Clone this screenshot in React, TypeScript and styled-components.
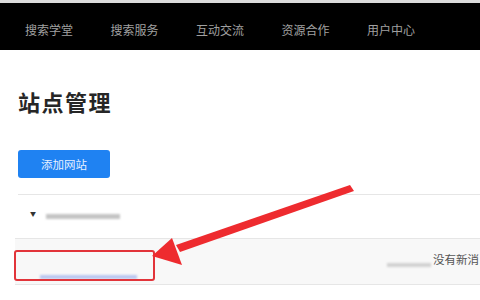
import React from 'react';
import styled, { createGlobalStyle } from 'styled-components';

const GlobalStyle = createGlobalStyle`
  html, body {
    margin: 0;
    padding: 0;
    background: #ffffff;
  }
  body {
    font-family: "Noto Sans CJK SC", "Noto Sans", sans-serif;
  }
`;

const navItems = ['搜索学堂', '搜索服务', '互动交流', '资源合作', '用户中心'];

const App = () => {
  return (
    <Page>
      <GlobalStyle />
      <TopLine />
      <NavBar>
        {navItems.map((item) => (
          <NavItem key={item}>{item}</NavItem>
        ))}
      </NavBar>

      <Content>
        <Title>站点管理</Title>
        <AddButton>添加网站</AddButton>
        <Divider />
        <SiteRow>
          <Caret>▼</Caret>
          <Blur width={74} color="#c4c4c4" height={5} />
        </SiteRow>
        <DetailRow>
          <LinkCell>
            <Blur width={97} color="#b9c6ef" height={4} />
          </LinkCell>
          <RightCell>
            <Blur width={44} color="#d2d2d2" height={4} offset={6} />
            <Message>没有新消</Message>
          </RightCell>
        </DetailRow>
      </Content>

      <HighlightBox />
      <ArrowLayer width="480" height="300" viewBox="0 0 480 300">
        <polygon points="350,185 354,191 180,252 176,245" fill="#ee2b2f" />
        <polygon points="152,256 172,238 182,265" fill="#ee2b2f" />
      </ArrowLayer>
    </Page>
  );
};

export default App;

const Page = styled.div`
  position: relative;
  width: 480px;
  height: 300px;
  overflow: hidden;
  background: #ffffff;
`;

const TopLine = styled.div`
  height: 3px;
  background: #dcdcdc;
`;

const NavBar = styled.div`
  height: 47px;
  background: #000000;
  display: flex;
  align-items: center;
  padding: 6px 0 0 25px;
  box-sizing: border-box;
`;

const NavItem = styled.div`
  width: 85.5px;
  flex-shrink: 0;
  color: #a0a0a0;
  font-size: 12px;
  line-height: 16px;
  white-space: nowrap;
`;

const Content = styled.div`
  padding-left: 18px;
  display: flex;
  flex-direction: column;
  align-items: flex-start;
`;

const Title = styled.h1`
  margin: 36px 0 0;
  font-size: 22px;
  line-height: 30px;
  font-weight: 700;
  letter-spacing: 1.5px;
  color: #262626;
`;

const AddButton = styled.button`
  margin-top: 34px;
  width: 92px;
  height: 28px;
  border: none;
  border-radius: 3px;
  background: #1f82f2;
  color: #e8f1ff;
  font-family: inherit;
  font-size: 11.5px;
  padding: 0;
`;

const Divider = styled.div`
  margin-top: 16px;
  align-self: stretch;
  height: 1px;
  background: #e6e6e6;
`;

const SiteRow = styled.div`
  height: 43px;
  display: flex;
  align-items: center;
  padding-left: 12px;
  gap: 10px;
`;

const Caret = styled.span`
  font-size: 6px;
  color: #333;
  margin-top: -6px;
`;

const Blur = styled.span<{ width: number; height: number; color: string; offset?: number }>`
  display: inline-block;
  width: ${(p) => p.width}px;
  height: ${(p) => p.height}px;
  background: ${(p) => p.color};
  filter: blur(1.2px);
  margin-top: ${(p) => p.offset ?? 0}px;
`;

const DetailRow = styled.div`
  margin-left: -3px;
  align-self: stretch;
  height: 45px;
  background: #f8f8f8;
  border-top: 1px solid #e6e6e6;
  border-bottom: 1px solid #e6e6e6;
  display: flex;
  justify-content: space-between;
  align-items: center;
`;

const LinkCell = styled.div`
  padding: 20px 0 0 25px;
`;

const RightCell = styled.div`
  display: flex;
  align-items: center;
  gap: 2px;
  padding-right: 1px;
  white-space: nowrap;
`;

const Message = styled.span`
  font-size: 11.5px;
  color: #555555;
  margin-top: -6px;
`;

const HighlightBox = styled.div`
  position: absolute;
  left: 14px;
  top: 250px;
  width: 137px;
  height: 27px;
  border: 2px solid #e2343a;
  border-radius: 3px;
`;

const ArrowLayer = styled.svg`
  position: absolute;
  left: 0;
  top: 0;
  pointer-events: none;
`;
